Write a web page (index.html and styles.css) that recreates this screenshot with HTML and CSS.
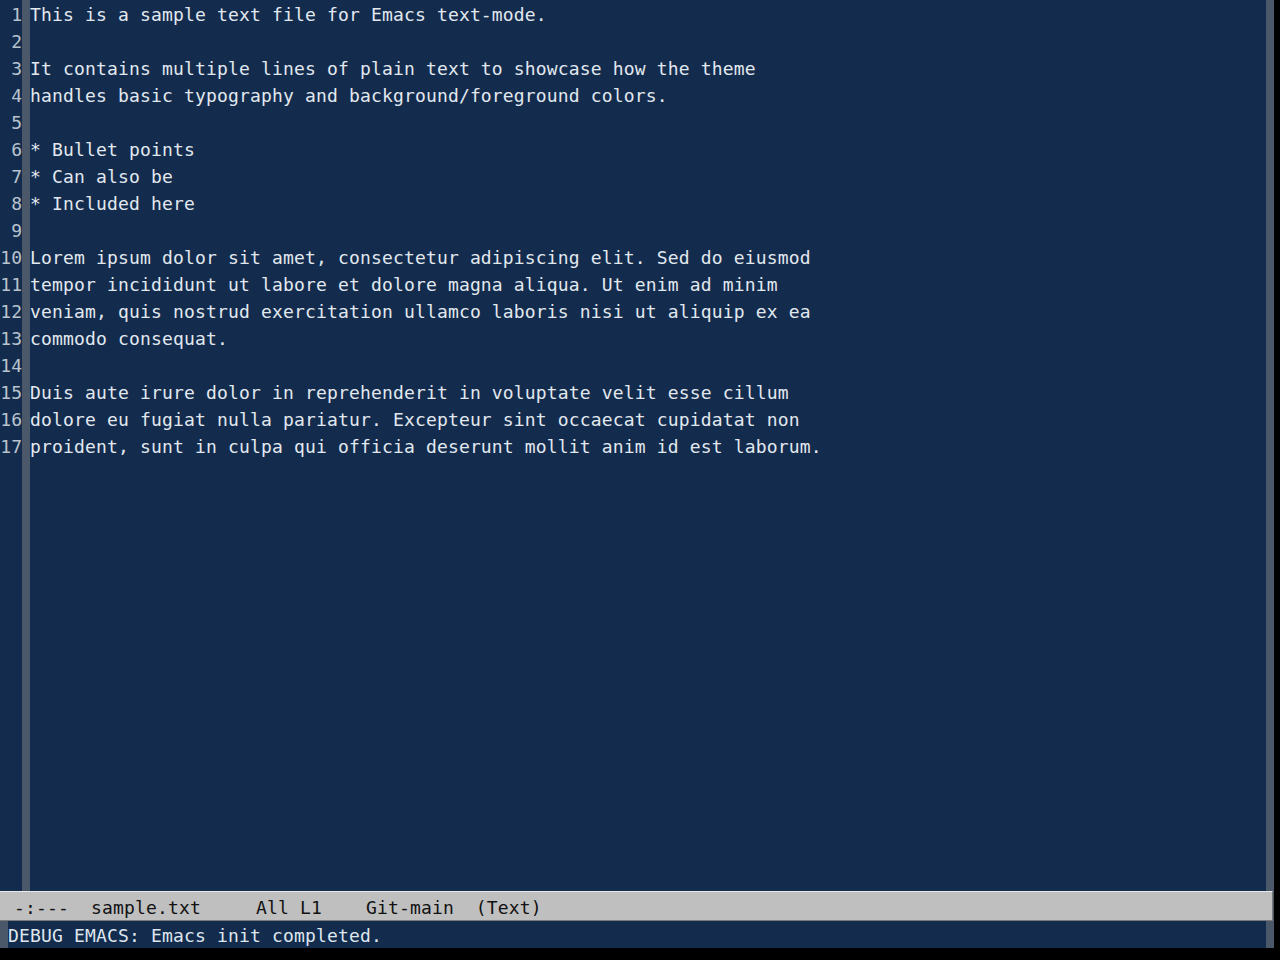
FILE: index.html
```html
<!DOCTYPE html>
<html lang="en">
  <head>
    <meta charset="UTF-8" />
    <meta name="viewport" content="width=device-width, initial-scale=1.0" />
    <title>sample.txt - Emacs</title>
    <link rel="stylesheet" href="styles.css">
  </head>
  <body>
    <div class="frame">
      <div class="window">
        <div class="gutter">
          <div>1</div>
          <div>2</div>
          <div>3</div>
          <div>4</div>
          <div>5</div>
          <div>6</div>
          <div>7</div>
          <div>8</div>
          <div>9</div>
          <div>10</div>
          <div>11</div>
          <div>12</div>
          <div>13</div>
          <div>14</div>
          <div>15</div>
          <div>16</div>
          <div>17</div>
        </div>
        <div class="fringe"></div>
        <pre class="buffer">This is a sample text file for Emacs text-mode.

It contains multiple lines of plain text to showcase how the theme
handles basic typography and background/foreground colors.

* Bullet points
* Can also be
* Included here

Lorem ipsum dolor sit amet, consectetur adipiscing elit. Sed do eiusmod
tempor incididunt ut labore et dolore magna aliqua. Ut enim ad minim
veniam, quis nostrud exercitation ullamco laboris nisi ut aliquip ex ea
commodo consequat.

Duis aute irure dolor in reprehenderit in voluptate velit esse cillum
dolore eu fugiat nulla pariatur. Excepteur sint occaecat cupidatat non
proident, sunt in culpa qui officia deserunt mollit anim id est laborum.</pre>
        <div class="fringe"></div>
      </div>
      <div class="mode-row">
        <pre class="mode-line"> -:---  sample.txt     All L1    Git-main  (Text)</pre>
        <div class="mode-edge"></div>
      </div>
      <div class="echo-row">
        <div class="fringe"></div>
        <pre class="echo">DEBUG EMACS: Emacs init completed.</pre>
        <div class="fringe"></div>
      </div>
    </div>
  </body>
</html>
```

FILE: styles.css
```css
body {
  margin: 0;
  background-color: #000;
  overflow: hidden;
}
pre {
  margin: 0;
}
.frame {
  width: 1274px;
  height: 948px;
  display: flex;
  flex-direction: column;
  background-color: #132c4d;
  font-family: "DejaVu Sans Mono", "Liberation Mono", monospace;
  font-size: 18px;
  letter-spacing: 0.16px;
  line-height: 27px;
}
.window {
  display: flex;
  height: 891px;
}
.gutter {
  width: 22px;
  padding-top: 1px;
  text-align: right;
  color: #b9c3ce;
  letter-spacing: 0;
}
.fringe {
  width: 8px;
  background-color: #4b5869;
}
.buffer {
  flex: 1;
  padding-top: 1px;
  font: inherit;
  color: #e2e8ef;
}
.mode-row {
  display: flex;
  height: 30px;
}
.mode-line {
  flex: 1;
  font: inherit;
  line-height: 25px;
  padding-top: 3px;
  padding-left: 3px;
  color: #111;
  background-color: #bfbfbf;
  border-top: 1px solid #e8e8e8;
  border-bottom: 1px solid #7a7a7a;
  border-right: 1px solid #7a7a7a;
}
.mode-edge {
  width: 1px;
  background-color: #4b5869;
}
.echo-row {
  display: flex;
  height: 27px;
}
.echo {
  flex: 1;
  font: inherit;
  line-height: 24px;
  padding-top: 3px;
  color: #dfe6ee;
}
```
